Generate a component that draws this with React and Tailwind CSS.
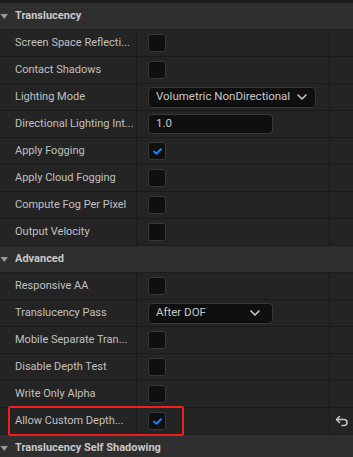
import React from "react";

const font = { fontFamily: "Roboto, 'Noto Sans', sans-serif" };

function Check({ checked }) {
  return (
    <div className="w-[18px] h-[18px] rounded-[3px] bg-[#0f0f0f] border border-[#383838] flex items-center justify-center">
      {checked && (
        <svg width="9" height="7" viewBox="0 0 9 7">
          <path d="M1 3.6 L3.4 5.8 L8 1.2" fill="none" stroke="#1f80e8" strokeWidth="2" strokeLinecap="round" strokeLinejoin="round" />
        </svg>
      )}
    </div>
  );
}

function Chevron() {
  return (
    <svg width="10" height="6" viewBox="0 0 10 6">
      <path d="M1 1 L5 5 L9 1" fill="none" stroke="#c8c8c8" strokeWidth="1.6" strokeLinecap="round" strokeLinejoin="round" />
    </svg>
  );
}

function Header({ title }) {
  return (
    <div className="h-[27px] bg-[#2f2f2f] border-b border-[#1c1c1c] flex items-center">
      <svg width="15" height="26" viewBox="0 0 15 26" className="shrink-0">
        <path d="M0.5 11 L8 11 L4.25 16 Z" fill="#9a9a9a" />
      </svg>
      <span className="text-[11px] font-bold text-[#c8c8c8]">{title}</span>
    </div>
  );
}

function Row({ label, children, reset, highlight }) {
  return (
    <div className="relative h-[27px] bg-[#242424] border-b border-[#1a1a1a] flex">
      <div className="w-[137px] border-r border-[#1a1a1a] flex items-center pl-[15px] pr-1 overflow-hidden">
        <span className="text-[11px] text-[#c0c0c0] whitespace-nowrap">{label}</span>
      </div>
      <div className="w-[193px] border-r border-[#1a1a1a] flex items-center pl-[11px]">{children}</div>
      <div className="flex-1 flex items-center justify-center">
        {reset && (
          <svg width="14" height="12" viewBox="0 0 14 12">
            <path d="M4.5 1.5 L1.5 4.5 L4.5 7.5" fill="none" stroke="#c8c8c8" strokeWidth="1.5" strokeLinecap="round" strokeLinejoin="round" />
            <path d="M1.8 4.5 H9 A3 3 0 0 1 9 10.5 H7" fill="none" stroke="#c8c8c8" strokeWidth="1.5" strokeLinecap="round" />
          </svg>
        )}
      </div>
      {highlight && (
        <div className="absolute left-[8px] top-[-2px] w-[176px] h-[30px] border-2 border-[#f01f1f] rounded-[2px] pointer-events-none" />
      )}
    </div>
  );
}

function Dropdown({ text, width }) {
  return (
    <div className={`h-[21px] ${width} rounded-[4px] bg-[#0f0f0f] border border-[#383838] flex items-center justify-between pl-[7px] pr-[12px]`}>
      <span className="text-[11.5px] text-[#c8c8c8] whitespace-nowrap">{text}</span>
      <Chevron />
    </div>
  );
}

export default function App() {
  return (
    <div className="w-[353px] h-[457px] bg-[#1c1c1c] overflow-hidden pt-[3px]" style={font}>
      <Header title="Translucency" />
      <Row label="Screen Space Reflecti..."><Check /></Row>
      <Row label="Contact Shadows"><Check /></Row>
      <Row label="Lighting Mode">
        <div className="h-[21px] w-[168px] rounded-[4px] bg-[#0f0f0f] border border-[#383838] flex items-center pl-[7px] gap-[7px]">
          <span className="text-[11.5px] text-[#c8c8c8] whitespace-nowrap">Volumetric NonDirectional</span>
          <Chevron />
        </div>
      </Row>
      <Row label="Directional Lighting Int...">
        <div className="h-[20px] w-[125px] rounded-[4px] bg-[#0f0f0f] border border-[#383838] flex items-center pl-[7px]">
          <span className="text-[11.5px] text-[#c8c8c8]">1.0</span>
        </div>
      </Row>
      <Row label="Apply Fogging"><Check checked /></Row>
      <Row label="Apply Cloud Fogging"><Check /></Row>
      <Row label="Compute Fog Per Pixel"><Check /></Row>
      <Row label="Output Velocity"><Check /></Row>
      <Header title="Advanced" />
      <Row label="Responsive AA"><Check /></Row>
      <Row label="Translucency Pass">
        <Dropdown text="After DOF" width="w-[125px]" />
      </Row>
      <Row label="Mobile Separate Tran..."><Check /></Row>
      <Row label="Disable Depth Test"><Check /></Row>
      <Row label="Write Only Alpha"><Check /></Row>
      <Row label="Allow Custom Depth..." reset highlight><Check checked /></Row>
      <Header title="Translucency Self Shadowing" />
    </div>
  );
}
